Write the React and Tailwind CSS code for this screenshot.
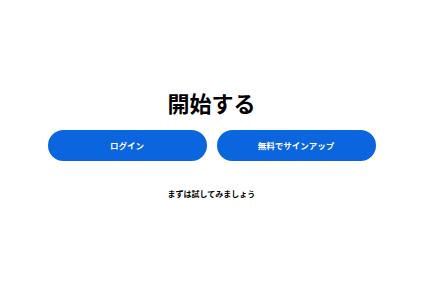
export default function App() {
  return (
    <div
      className="h-screen w-full bg-white flex flex-col items-center justify-center pt-[4px]"
      style={{ fontFamily: '"Noto Sans CJK JP", "Noto Sans", sans-serif' }}
    >
      <h1 className="text-[22px] leading-[28px] font-bold text-black">開始する</h1>

      <div className="mt-[14px] flex gap-[10px]">
        <button className="w-[159px] h-[31px] rounded-full bg-[#0a65de] text-white text-[8.5px] font-bold">
          ログイン
        </button>
        <button className="w-[159px] h-[31px] rounded-full bg-[#0a65de] text-white text-[8.5px] font-bold">
          無料でサインアップ
        </button>
      </div>

      <p className="mt-[27px] text-[8px] leading-[12px] font-bold text-black">まずは試してみましょう</p>
    </div>
  );
}
